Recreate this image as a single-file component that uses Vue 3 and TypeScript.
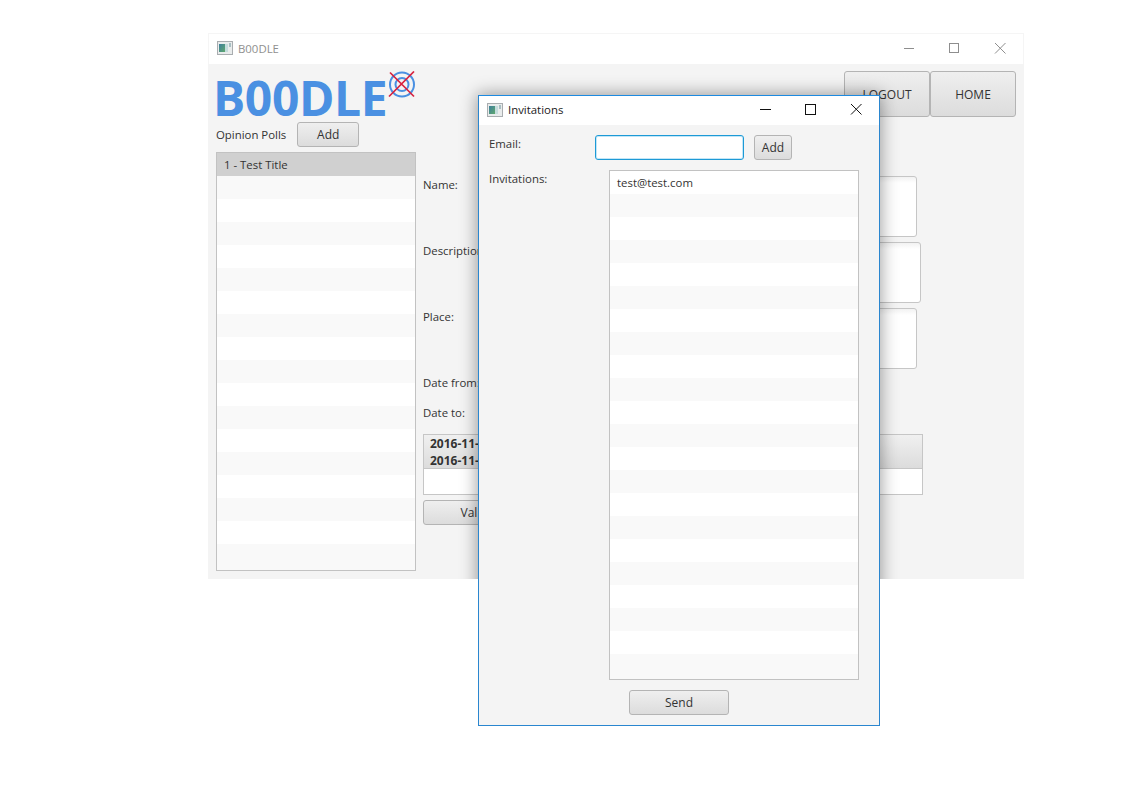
<script setup lang="ts">
const pollRows = Array.from({ length: 18 }, (_, i) => (i === 0 ? '1 - Test Title' : ''))
const inviteRows = Array.from({ length: 22 }, (_, i) => (i === 0 ? 'test@test.com' : ''))
const fields = [
  { label: 'Name:', cls: 'short' },
  { label: 'Description:', cls: 'long' },
  { label: 'Place:', cls: 'short' },
]
</script>

<template>
  <div class="desktop">
    <!-- Main window -->
    <section class="window main-window">
      <header class="titlebar">
        <svg class="app-icon" width="16" height="14" viewBox="0 0 16 14">
          <defs>
            <linearGradient id="iconMain" x1="0" y1="0" x2="1" y2="1">
              <stop offset="0" stop-color="#3d7f9c" />
              <stop offset="1" stop-color="#5fa86e" />
            </linearGradient>
          </defs>
          <rect x="0.5" y="0.5" width="15" height="13" fill="#e9ecec" stroke="#a9adb0" />
          <rect x="2" y="3" width="6" height="8" fill="url(#iconMain)" />
          <rect x="8" y="3" width="3" height="8" fill="#c4dcdc" />
          <rect x="12" y="2" width="2" height="4" fill="#a8bfc3" />
        </svg>
        <span class="title-text muted">B00DLE</span>
        <div class="controls muted-controls">
          <svg width="46" height="30" viewBox="0 0 46 30"><path d="M19 15.500h10" stroke="currentColor" /></svg>
          <svg width="46" height="30" viewBox="0 0 46 30"><rect x="18.500" y="10.500" width="9" height="9" fill="none" stroke="currentColor" /></svg>
          <svg width="46" height="30" viewBox="0 0 46 30"><path d="M18 10l10.500 10.500M28.500 10L18 20.500" stroke="currentColor" fill="none" /></svg>
        </div>
      </header>

      <div class="main-body">
        <div class="top-row">
          <div class="logo">
            <span class="logo-text">B00DLE</span>
            <svg class="logo-mark" width="30" height="28" viewBox="0 0 30 28">
              <circle cx="15" cy="13.500" r="12" fill="none" stroke="#4a90e2" stroke-width="2" />
              <circle cx="15" cy="13.500" r="6.500" fill="none" stroke="#4a90e2" stroke-width="2" />
              <path d="M3 1.500l24 24M27 0.500L2 25.500" stroke="#d8223f" stroke-width="1.700" fill="none" />
            </svg>
          </div>
          <div class="nav-buttons">
            <button class="btn nav-btn">LOGOUT</button>
            <button class="btn nav-btn">HOME</button>
          </div>
        </div>

        <div class="columns">
          <aside class="polls">
            <div class="polls-head">
              <span>Opinion Polls</span>
              <button class="btn add-poll">Add</button>
            </div>
            <ul class="list poll-list">
              <li
                v-for="(row, i) in pollRows"
                :key="i"
                :class="['row', { odd: i % 2 === 1, selected: i === 0 }]"
              >{{ row }}</li>
            </ul>
          </aside>

          <div class="form">
            <div v-for="f in fields" :key="f.label" class="field">
              <label class="field-label">{{ f.label }}</label>
              <div :class="['area', f.cls]"></div>
            </div>
            <div class="date-row">Date from:</div>
            <div class="date-row">Date to:</div>
            <div class="table">
              <div class="table-head">
                <div class="col-bold">2016-11-</div>
                <div class="col-bold">2016-11-</div>
              </div>
              <div class="table-body"></div>
            </div>
            <button class="btn validate">Validate</button>
          </div>
        </div>
      </div>

      <!-- shadow of the dialog is cut off at the edge of the main window -->
      <div class="dialog-shadow"></div>
    </section>

    <!-- Invitations dialog -->
    <section class="window dialog">
      <header class="titlebar dialog-bar">
        <svg class="app-icon" width="16" height="14" viewBox="0 0 16 14">
          <defs>
            <linearGradient id="iconDialog" x1="0" y1="0" x2="1" y2="1">
              <stop offset="0" stop-color="#3d7f9c" />
              <stop offset="1" stop-color="#5fa86e" />
            </linearGradient>
          </defs>
          <rect x="0.5" y="0.5" width="15" height="13" fill="#e9ecec" stroke="#a9adb0" />
          <rect x="2" y="3" width="6" height="8" fill="url(#iconDialog)" />
          <rect x="8" y="3" width="3" height="8" fill="#c4dcdc" />
          <rect x="12" y="2" width="2" height="4" fill="#a8bfc3" />
        </svg>
        <span class="title-text">Invitations</span>
        <div class="controls">
          <svg width="46" height="30" viewBox="0 0 46 30"><path d="M19 15.500h11" stroke="currentColor" /></svg>
          <svg width="46" height="30" viewBox="0 0 46 30"><rect x="18.500" y="10.500" width="10" height="10" fill="none" stroke="currentColor" /></svg>
          <svg width="46" height="30" viewBox="0 0 46 30"><path d="M18 10l10.500 10.500M28.500 10L18 20.500" stroke="currentColor" fill="none" /></svg>
        </div>
      </header>

      <div class="dialog-body">
        <div class="email-row">
          <label class="dialog-label">Email:</label>
          <input class="email-input" type="text" />
          <button class="btn add-email">Add</button>
        </div>
        <div class="invites-row">
          <label class="dialog-label invites-label">Invitations:</label>
          <ul class="list invite-list">
            <li
              v-for="(row, i) in inviteRows"
              :key="i"
              :class="['row', { odd: i % 2 === 1 }]"
            >{{ row }}</li>
          </ul>
        </div>
        <button class="btn send">Send</button>
      </div>
    </section>
  </div>
</template>

<style>
html,
body {
  margin: 0;
  background: #fff;
}
</style>

<style scoped>
.desktop {
  position: relative;
  width: 1145px;
  height: 794px;
  overflow: hidden;
  background: #fff;
  font-family: 'Open Sans', 'Noto Sans', sans-serif;
  font-size: 11.4px;
  color: #333;
}

.window {
  position: absolute;
  box-sizing: border-box;
  background: #f4f4f4;
}

.main-window {
  left: 208px;
  top: 33px;
  width: 816px;
  height: 546px;
  overflow: hidden;
}

.dialog {
  left: 478px;
  top: 95px;
  width: 402px;
  height: 631px;
  border: 1px solid #2a86cf;
  border-top-color: #1d8ae0;
}

.dialog-shadow {
  position: absolute;
  left: 270px;
  top: 62px;
  width: 402px;
  height: 631px;
  box-shadow: 0 0 16px 1px rgba(0, 0, 0, 0.38);
}

.titlebar {
  box-sizing: border-box;
  display: flex;
  align-items: center;
  height: 31px;
  padding-left: 8px;
  padding-bottom: 2px;
  background: #fff;
  border: 1px solid #f5f5f5;
  border-bottom: none;
}

.dialog-bar {
  height: 29px;
  padding-left: 8px;
  padding-bottom: 2px;
  border: none;
}

.app-icon {
  flex: none;
}

.title-text {
  margin-left: 5px;
  color: #1a1a1a;
}

.title-text.muted {
  color: #8f8f8f;
}

.controls {
  display: flex;
  margin-left: auto;
  margin-top: -1px;
  color: #111;
}

.muted-controls {
  color: #8e8e8e;
}

.main-body {
  padding: 7px 8px 0;
}

.top-row {
  display: flex;
  justify-content: space-between;
  align-items: flex-start;
  height: 51px;
}

.logo {
  display: flex;
  align-items: flex-start;
}

.logo-text {
  margin-top: 4px;
  margin-left: -3px;
  font-size: 48px;
  line-height: 46px;
  font-weight: 700;
  letter-spacing: -0.4px;
  color: #4a90e2;
}

.logo-mark {
  margin-left: 0;
}

.nav-buttons {
  display: flex;
}

.btn {
  box-sizing: border-box;
  border: 1px solid #b4b4b4;
  border-radius: 3px;
  background: linear-gradient(#efefef, #dcdcdc);
  font-family: inherit;
  font-size: 12px;
  color: #333;
  padding: 0 0 1px;
}

.nav-btn {
  width: 86px;
  height: 46px;
  padding: 0;
}

.columns {
  display: flex;
  gap: 7px;
}

.polls {
  width: 200px;
  flex: none;
}

.polls-head {
  display: flex;
  align-items: center;
  height: 25px;
  margin-bottom: 5px;
}

.add-poll {
  width: 62px;
  height: 25px;
  margin-left: 11px;
}

.list {
  box-sizing: border-box;
  margin: 0;
  padding: 0;
  list-style: none;
  border: 1px solid #c2c2c2;
  background: #fff;
}

.poll-list {
  height: 419px;
  background: #f9f9f9;
}

.row {
  box-sizing: border-box;
  height: 23px;
  line-height: 23px;
  padding-left: 7px;
  background: #fff;
}

.row.odd {
  background: #f9f9f9;
}

.row.selected {
  background: #d0d0d0;
}

.form {
  flex: 1;
  margin-top: 54px;
}

.field {
  display: flex;
  height: 61px;
  margin-bottom: 5px;
}

.field-label {
  width: 100px;
  flex: none;
  line-height: 17px;
}

.area {
  box-sizing: border-box;
  height: 61px;
  border: 1px solid #c6c6c6;
  border-radius: 3px;
  background: linear-gradient(#f2f2f2, #fff 6px);
}

.area.short {
  width: 394px;
}

.area.long {
  width: 398px;
}

.date-row {
  height: 30px;
  line-height: 17px;
}

.table {
  box-sizing: border-box;
  width: 500px;
  height: 61px;
  border: 1px solid #c6c6c6;
  background: #fff;
}

.table-head {
  height: 34px;
  padding: 1px 0 0 6px;
  background: linear-gradient(#f0f0f0, #dcdcdc);
  border-bottom: 1px solid #c6c6c6;
  box-sizing: border-box;
}

.col-bold {
  height: 17px;
  line-height: 16px;
  font-weight: 700;
  font-size: 12px;
}

.validate {
  display: block;
  width: 120px;
  height: 25px;
  margin-top: 5px;
}

.dialog-body {
  display: flex;
  flex-direction: column;
  padding: 10px 20px 0 10px;
}

.email-row {
  display: flex;
  align-items: flex-start;
  height: 25px;
}

.dialog-label {
  width: 106px;
  flex: none;
  line-height: 17px;
}

.email-input {
  box-sizing: border-box;
  width: 149px;
  height: 25px;
  padding: 0 6px;
  border: 1px solid #1d9ad6;
  border-radius: 3px;
  box-shadow: inset 0 0 0 1px #c3e6f7;
  outline: none;
  background: #fff;
}

.add-email {
  width: 38px;
  height: 25px;
  margin-left: 10px;
}

.invites-row {
  display: flex;
  margin-top: 10px;
}

.invites-label {
  width: 120px;
}

.invite-list {
  width: 250px;
  height: 510px;
  background: #f9f9f9;
}

.send {
  align-self: flex-start;
  width: 100px;
  height: 25px;
  margin-top: 10px;
  margin-left: 140px;
}
</style>
